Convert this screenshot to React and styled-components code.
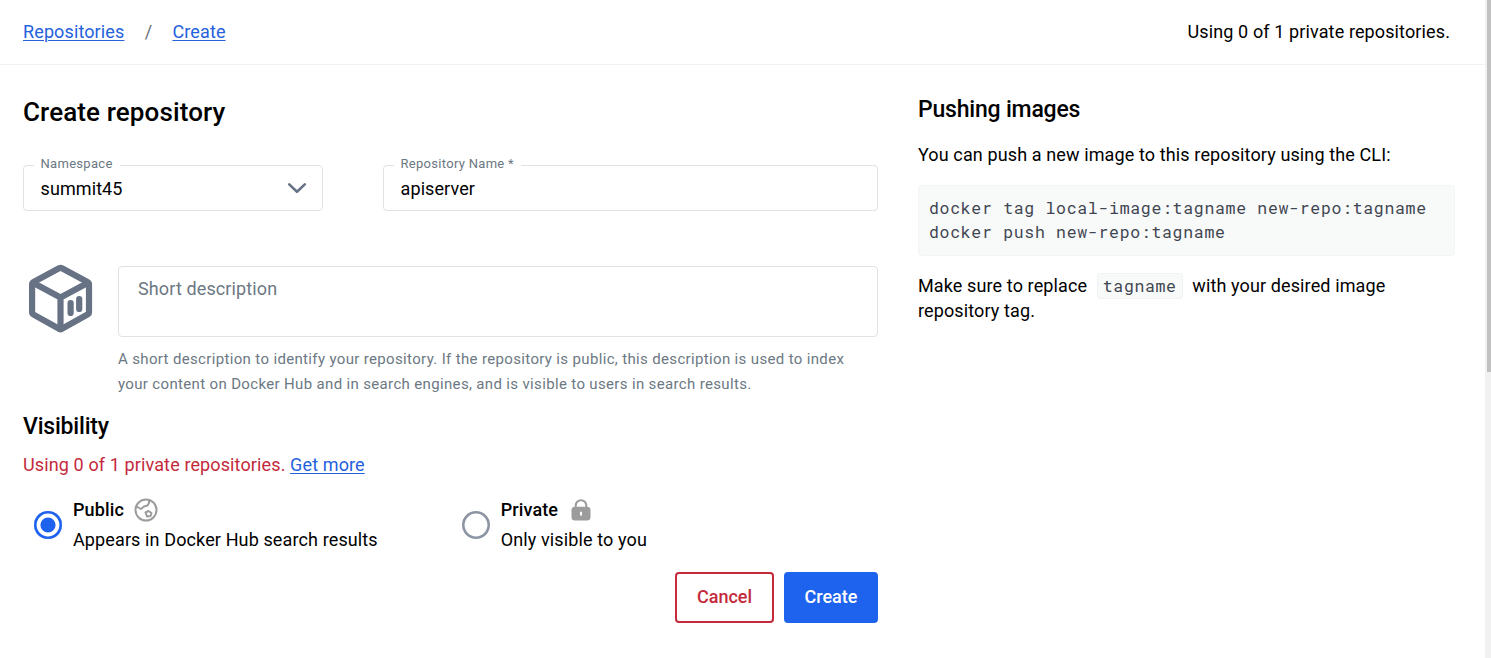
import React from 'react'
import styled, { createGlobalStyle } from 'styled-components'

const colors = {
  blue: '#1d63ed',
  link: '#2462dc',
  red: '#c4293c',
  grey: '#677285',
  label: '#6c7883',
  border: '#e1e2e6',
  icon: '#9c9c9c'
}

const options = [
  { title: 'Public', text: 'Appears in Docker Hub search results', icon: <GlobeIcon />, checked: true },
  { title: 'Private', text: 'Only visible to you', icon: <LockIcon />, checked: false }
]

export default function App () {
  return (
    <Page>
      <GlobalStyle />
      <Content>
        <Header>
          <Breadcrumbs>
            <Link href='#'>Repositories</Link>
            <Slash>/</Slash>
            <Link href='#'>Create</Link>
          </Breadcrumbs>
          <span>Using 0 of 1 private repositories.</span>
        </Header>
        <Main>
          <Form>
            <Title>Create repository</Title>
            <Fields>
              <Field $width='300px'>
                <Label>Namespace</Label>
                <Value>summit45</Value>
                <ChevronIcon />
              </Field>
              <Field $width='495px'>
                <Label>Repository Name *</Label>
                <Value>apiserver</Value>
              </Field>
            </Fields>
            <Description>
              <CubeIcon />
              <div>
                <TextBox>Short description</TextBox>
                <Help>
                  A short description to identify your repository. If the repository is public, this description is used to index<br />
                  your content on Docker Hub and in search engines, and is visible to users in search results.
                </Help>
              </div>
            </Description>
            <Subtitle>Visibility</Subtitle>
            <Quota>Using 0 of 1 private repositories. <Link href='#'>Get more</Link></Quota>
            <Options>
              {options.map(({ title, text, icon, checked }) => (
                <Option key={title}>
                  <Radio $checked={checked} />
                  <div>
                    <OptionTitle>{title}{icon}</OptionTitle>
                    <OptionText>{text}</OptionText>
                  </div>
                </Option>
              ))}
            </Options>
            <Actions>
              <Button $width='99px'>Cancel</Button>
              <Button $width='94px' $primary>Create</Button>
            </Actions>
          </Form>
          <Aside>
            <AsideTitle>Pushing images</AsideTitle>
            <Text>You can push a new image to this repository using the CLI:</Text>
            <CodeBlock>{'docker tag local-image:tagname new-repo:tagname\ndocker push new-repo:tagname'}</CodeBlock>
            <Text>Make sure to replace <Code>tagname</Code> with your desired image<br />repository tag.</Text>
          </Aside>
        </Main>
      </Content>
      <Scrollbar><Thumb /></Scrollbar>
    </Page>
  )
}

function ChevronIcon () {
  return (
    <svg width='20' height='12' viewBox='0 0 20 12' fill='none' stroke={colors.grey} strokeWidth='2.6' strokeLinecap='round' strokeLinejoin='round'>
      <path d='M2.2 2.4 10 9.8l7.8-7.4' />
    </svg>
  )
}

function CubeIcon () {
  return (
    <svg width='64' height='70' viewBox='0 0 64 70' fill='none' stroke={colors.grey} strokeWidth='6.2' strokeLinejoin='round'>
      <path d='M30.5 4.100Q31.500 3.500 32.500 4.100L58.500 18Q60 18.800 60 20.500V48Q60 49.800 58.500 50.600L32.500 65Q31.500 65.600 30.500 65L4.600 50.600Q3.100 49.800 3.100 48V20.500Q3.100 18.800 4.600 18Z' />
      <path d='M4 18.800 31.500 33.500 59 18.800M31.500 33.500V65' />
      <path d='M41.600 39.100v9.800M50.200 35.100v9.800' strokeLinecap='round' />
    </svg>
  )
}

function GlobeIcon () {
  return (
    <svg width='24' height='24' viewBox='0 0 24 24' fill='none' stroke={colors.icon} strokeWidth='2' strokeLinejoin='round'>
      <circle cx='12' cy='12' r='10.5' />
      <path d='M2.500 8.500 7 11 10 8.500 13.500 7.500 15 5V2' />
      <path d='M11.500 14.500 14.500 13 17.500 15 16.500 18 13 18.500Z' />
    </svg>
  )
}

function LockIcon () {
  return (
    <svg width='24' height='24' viewBox='0 0 24 24' fill='none'>
      <path d='M6.700 10V7.500a5.300 5.300 0 0 1 10.600 0V10' stroke={colors.icon} strokeWidth='2.100' />
      <rect x='2.500' y='8.700' width='19' height='13.800' rx='3.500' fill={colors.icon} />
      <path d='M12 13.800v3.600' stroke='#fff' strokeWidth='2' />
    </svg>
  )
}

const GlobalStyle = createGlobalStyle`
  * {
    box-sizing: border-box;
  }
  body {
    margin: 0;
    color: #000;
    background: #fff;
    font-family: Roboto, sans-serif;
    font-size: 18px;
    letter-spacing: 0.12px;
  }
  svg {
    flex-shrink: 0;
  }
`
const Page = styled.div`
  display: flex;
  height: 658px;
  overflow: hidden;
`
const Content = styled.div`
  flex: 1;
`
const Header = styled.header`
  display: flex;
  align-items: center;
  justify-content: space-between;
  height: 65px;
  padding: 0 35px 1px 23px;
  border-bottom: 1px solid #f1f1f2;
`
const Breadcrumbs = styled.nav`
  display: flex;
`
const Link = styled.a`
  color: ${colors.link};
  text-decoration: underline;
  text-decoration-thickness: 1px;
  text-underline-offset: 2px;
`
const Slash = styled.span`
  width: 48px;
  text-align: center;
  color: #666e7a;
`
const Main = styled.main`
  display: flex;
  gap: 40px;
  padding-left: 23px;
`
const Form = styled.section`
  width: 855px;
  padding-top: 31px;
`
const Title = styled.h1`
  margin: 0;
  font-size: 26px;
  font-weight: 500;
  line-height: 32px;
`
const Fields = styled.div`
  display: flex;
  gap: 60px;
  margin-top: 37px;
`
const Field = styled.div`
  position: relative;
  display: flex;
  align-items: center;
  justify-content: space-between;
  width: ${({ $width }) => $width};
  height: 46px;
  padding: 0 15px 0 16.6px;
  border: 1px solid ${colors.border};
  border-radius: 4px;
`
const Label = styled.label`
  position: absolute;
  top: -10px;
  left: 10px;
  padding: 0 7px 0 6.5px;
  background: #fff;
  color: ${colors.label};
  font-size: 13px;
  line-height: 16px;
  letter-spacing: 0.3px;
`
const Value = styled.span`
  letter-spacing: 0.08px;
`
const Description = styled.div`
  display: flex;
  gap: 25px;
  margin-top: 55px;
  padding-left: 6px;
  > svg {
    margin-top: -2px;
  }
`
const TextBox = styled.div`
  width: 760px;
  height: 71px;
  padding: 10px 19px;
  border: 1px solid ${colors.border};
  border-radius: 4px;
  color: ${colors.label};
  line-height: 24px;
`
const Help = styled.p`
  margin: 10px 0 0;
  color: ${colors.label};
  font-size: 15px;
  line-height: 25px;
  letter-spacing: 0.345px;
  white-space: nowrap;
`
const Subtitle = styled.h2`
  margin: 15px 0 11px;
  font-size: 23px;
  font-weight: 500;
  line-height: 30px;
  letter-spacing: -0.2px;
`
const Quota = styled.p`
  margin: 0;
  color: ${colors.red};
  line-height: 24px;
`
const Options = styled.div`
  display: flex;
  margin-top: 18px;
  padding-left: 11px;
`
const Option = styled.div`
  display: flex;
  flex-shrink: 0;
  align-items: center;
  gap: 11px;
  width: 427.7px;
`
const Radio = styled.span`
  width: 28px;
  height: 28px;
  border-radius: 50%;
  background: ${({ $checked }) => $checked ? colors.blue : '#fff'};
  box-shadow:
    inset 0 0 0 2.6px ${({ $checked }) => $checked ? colors.blue : '#8d94a4'},
    inset 0 0 0 6.4px #fff;
`
const OptionTitle = styled.div`
  display: flex;
  align-items: center;
  gap: 10.5px;
  font-weight: 500;
  line-height: 30px;
  > svg {
    margin-top: -1px;
  }
`
const OptionText = styled.div`
  line-height: 30px;
`
const Actions = styled.div`
  display: flex;
  justify-content: flex-end;
  gap: 10px;
  margin-top: 17px;
`
const Button = styled.button`
  width: ${({ $width }) => $width};
  height: 51px;
  padding: 0 0 2px;
  border: 2px solid ${({ $primary }) => $primary ? colors.blue : colors.red};
  border-radius: 4px;
  background: ${({ $primary }) => $primary ? colors.blue : '#fff'};
  color: ${({ $primary }) => $primary ? '#fff' : colors.red};
  font-family: inherit;
  font-size: 18px;
  font-weight: 500;
`
const Aside = styled.aside`
  width: 537px;
  padding-top: 30px;
`
const AsideTitle = styled.h2`
  margin: 0 0 17px;
  font-size: 23px;
  font-weight: 500;
  line-height: 30px;
  letter-spacing: -0.2px;
`
const Text = styled.p`
  margin: 0;
  line-height: 25px;
  white-space: nowrap;
`
const CodeBlock = styled.pre`
  height: 71px;
  margin: 18px 0 17px;
  padding: 10px;
  border: 1px solid #f3f4f4;
  border-radius: 4px;
  background: #f8f9f9;
  color: #3f4651;
  font-family: 'Roboto Mono', 'DejaVu Sans Mono', monospace;
  font-size: 16.5px;
  line-height: 24px;
  letter-spacing: 0.69px;
`
const Code = styled.code`
  margin: 0 5px;
  padding: 1px 5px 2px;
  border: 1px solid #f1f2f3;
  border-radius: 4px;
  background: #f8f9f9;
  color: #3f4651;
  font-family: 'Roboto Mono', 'DejaVu Sans Mono', monospace;
  font-size: 16.5px;
  letter-spacing: 0.65px;
`
const Scrollbar = styled.div`
  width: 6px;
  padding-left: 2px;
  background: #f1f1f1;
`
const Thumb = styled.div`
  height: 372px;
  background: #c1c1c1;
`
